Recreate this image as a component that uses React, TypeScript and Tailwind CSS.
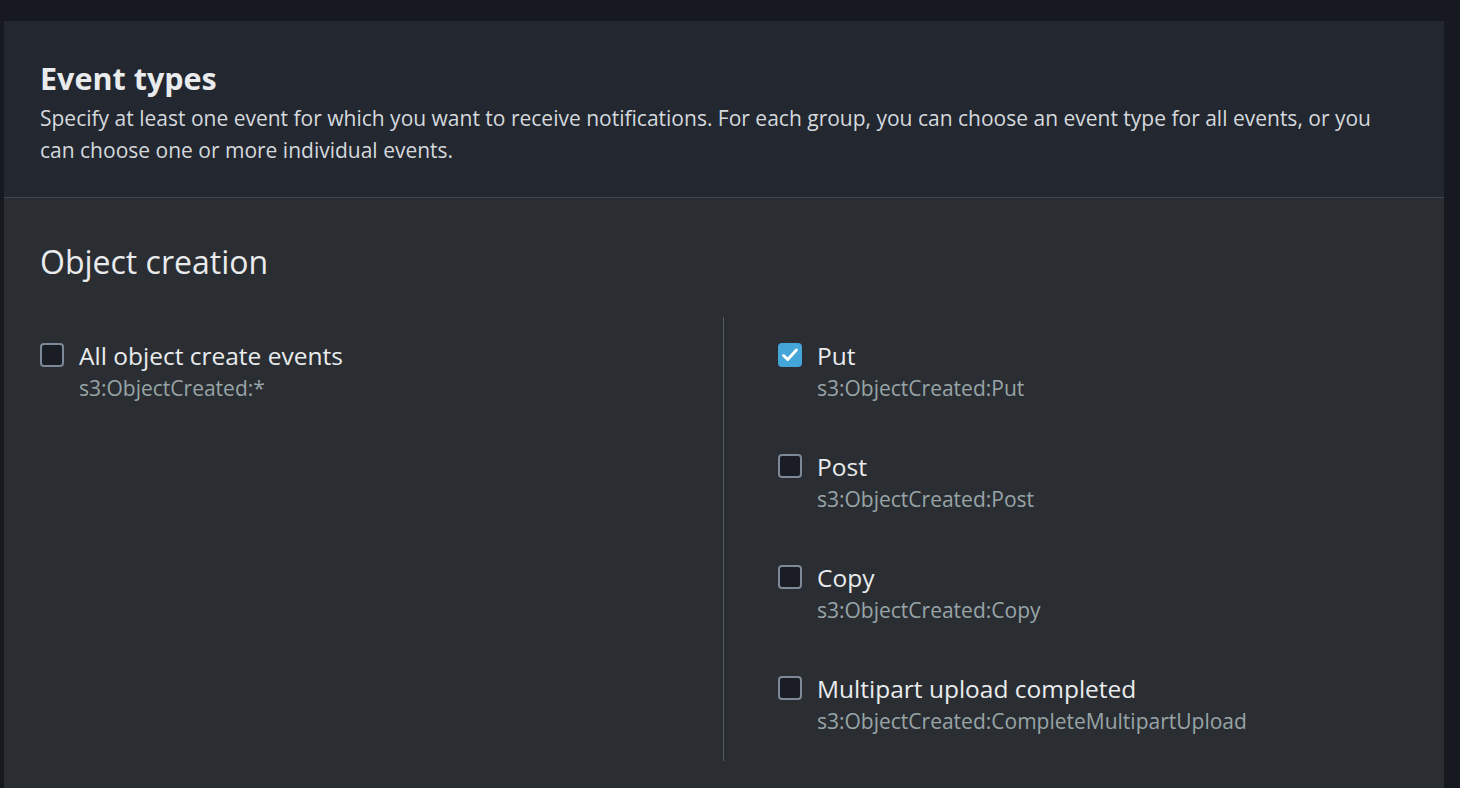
import React from 'react';

type EventOption = {
  label: string;
  code: string;
  checked?: boolean;
};

const INDIVIDUAL_EVENTS: EventOption[] = [
  { label: 'Put', code: 's3:ObjectCreated:Put', checked: true },
  { label: 'Post', code: 's3:ObjectCreated:Post' },
  { label: 'Copy', code: 's3:ObjectCreated:Copy' },
  { label: 'Multipart upload completed', code: 's3:ObjectCreated:CompleteMultipartUpload' },
];

function Checkbox({ checked }: { checked?: boolean }) {
  if (checked) {
    return (
      <div className="w-6 h-6 mt-1 shrink-0 rounded-[4px] bg-[#44a5d8] flex items-center justify-center">
        <svg viewBox="0 0 24 24" className="w-[22px] h-[22px]" fill="none">
          <path d="M5 12.5l4.5 4.5 9.5-10.5" stroke="#ffffff" strokeWidth="3.2" strokeLinecap="round" strokeLinejoin="round" />
        </svg>
      </div>
    );
  }
  return <div className="w-6 h-6 mt-1 shrink-0 rounded-[4px] border-2 border-[#7d8998] bg-[#1a1d24]" />;
}

function EventRow({ option }: { option: EventOption }) {
  return (
    <div className="flex gap-[15px]">
      <Checkbox checked={option.checked} />
      <div>
        <div className="text-[24.5px] leading-[34px] text-[#e9ebed]">{option.label}</div>
        <div className="text-[21px] leading-[30px] text-[#98a4a6]">{option.code}</div>
      </div>
    </div>
  );
}

export default function App() {
  return (
    <div className="min-h-screen bg-[#161a20] pt-[21px] pl-1 pr-4" style={{ fontFamily: '"Open Sans", "Noto Sans", sans-serif' }}>
      <div className="bg-[#2a2e33] min-h-[767px]">
        <header className="bg-[#232730] border-b border-[#414750] px-9 pt-[39px] pb-[31px]">
          <h2 className="text-[30.5px] leading-[36px] font-bold text-[#e9ebed]">Event types</h2>
          <p className="mt-[6px] text-[21px] leading-[32px] text-[#d5d9dd] max-w-[1380px]">
            Specify at least one event for which you want to receive notifications. For each group, you can choose an event type for all events, or you can choose one or more individual events.
          </p>
        </header>

        <section className="px-9 pt-[44px]">
          <h3 className="text-[32px] leading-[40px] text-[#e9ebed]">Object creation</h3>

          <div className="mt-[35px] flex">
            <div className="w-[683px] pt-[22px]">
              <EventRow option={{ label: 'All object create events', code: 's3:ObjectCreated:*' }} />
            </div>
            <div className="border-l border-[#535a64] pl-[54px] pt-[22px] pb-[25px] flex flex-col gap-[47px]">
              {INDIVIDUAL_EVENTS.map((option) => (
                <EventRow key={option.code} option={option} />
              ))}
            </div>
          </div>
        </section>
      </div>
    </div>
  );
}
